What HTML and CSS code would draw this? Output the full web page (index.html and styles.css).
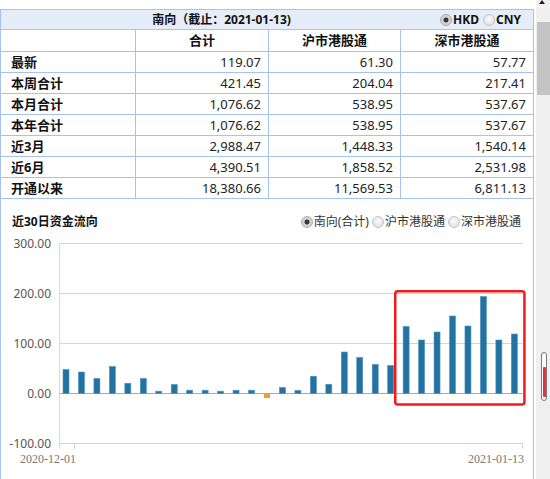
FILE: index.html
```html
<!DOCTYPE html>
<html lang="zh">
<head>
<meta charset="utf-8">
<title>南向资金</title>
<link rel="stylesheet" href="styles.css">
</head>
<body>
<div class="page">
  <div class="panel">
    <div class="tbl">
      <div class="title-row">
        <div class="title">南向（截止：2021-01-13)</div>
        <div class="cur">
          <span class="radio on"></span><span class="cur-label">HKD</span>
          <span class="radio gap"></span><span class="cur-label">CNY</span>
        </div>
      </div>
      <div class="th"></div><div class="th">合计</div><div class="th">沪市港股通</div><div class="th last">深市港股通</div>

      <div class="td lbl">最新</div><div class="td num">119.07</div><div class="td num">61.30</div><div class="td num last">57.77</div>
      <div class="td lbl">本周合计</div><div class="td num">421.45</div><div class="td num">204.04</div><div class="td num last">217.41</div>
      <div class="td lbl">本月合计</div><div class="td num">1,076.62</div><div class="td num">538.95</div><div class="td num last">537.67</div>
      <div class="td lbl">本年合计</div><div class="td num">1,076.62</div><div class="td num">538.95</div><div class="td num last">537.67</div>
      <div class="td lbl">近3月</div><div class="td num">2,988.47</div><div class="td num">1,448.33</div><div class="td num last">1,540.14</div>
      <div class="td lbl">近6月</div><div class="td num">4,390.51</div><div class="td num">1,858.52</div><div class="td num last">2,531.98</div>
      <div class="td lbl">开通以来</div><div class="td num">18,380.66</div><div class="td num">11,569.53</div><div class="td num last">6,811.13</div>
    </div>

    <div class="chart">
      <div class="chart-head">
        <div class="chart-title">近30日资金流向</div>
        <div class="opts">
          <span class="radio on"></span><span class="opt">南向(合计)</span>
          <span class="radio gap2"></span><span class="opt">沪市港股通</span>
          <span class="radio gap2"></span><span class="opt">深市港股通</span>
        </div>
      </div>
      <svg class="plot" width="532" height="250" viewBox="1 229 532 250" xmlns="http://www.w3.org/2000/svg">
        <g stroke="#d4d4d4" stroke-width="1">
          <line x1="59.5" y1="243.5" x2="522.5" y2="243.5"/>
          <line x1="59.5" y1="293.5" x2="522.5" y2="293.5"/>
          <line x1="59.5" y1="343.5" x2="522.5" y2="343.5"/>
        </g>
        <line x1="59.5" y1="243" x2="59.5" y2="448.5" stroke="#d3dbe5"/>
        <line x1="59.5" y1="443.5" x2="522.5" y2="443.5" stroke="#c6d3e3"/>
        <line x1="74.5" y1="443.5" x2="74.5" y2="448.5" stroke="#c6d3e3"/>
        <line x1="522.5" y1="443.5" x2="522.5" y2="448.5" stroke="#c6d3e3"/>
        <line x1="59.5" y1="393.5" x2="522.5" y2="393.5" stroke="#a9a9a9"/>

        <g font-family="Noto Sans, sans-serif" font-size="12" fill="#555" text-anchor="end">
          <text x="51" y="248">300.00</text>
          <text x="51" y="298">200.00</text>
          <text x="51" y="348">100.00</text>
          <text x="51" y="398">0.00</text>
          <text x="51" y="448">-100.00</text>
        </g>
        <g font-family="Liberation Serif, serif" font-size="12" fill="#777" text-anchor="end">
          <text x="76" y="463">2020-12-01</text>
          <text x="524" y="463">2021-01-13</text>
        </g>

        <g fill="#2373a2" stroke="#4f93bf" stroke-width="0.6">
          <rect x="63" y="369.5" width="6" height="24"/>
          <rect x="78.46" y="372" width="6" height="21.5"/>
          <rect x="93.92" y="378.5" width="6" height="15"/>
          <rect x="109.38" y="366.5" width="6" height="27"/>
          <rect x="124.84" y="383.25" width="6" height="10.25"/>
          <rect x="140.3" y="378.5" width="6" height="15"/>
          <rect x="155.76" y="391.2" width="6" height="2.3"/>
          <rect x="171.22" y="384.5" width="6" height="9"/>
          <rect x="186.68" y="390.2" width="6" height="3.3"/>
          <rect x="202.14" y="390.2" width="6" height="3.3"/>
          <rect x="217.6" y="391.2" width="6" height="2.3"/>
          <rect x="233.06" y="390.2" width="6" height="3.3"/>
          <rect x="248.52" y="390.2" width="6" height="3.3"/>
          <rect x="279.44" y="387.5" width="6" height="6"/>
          <rect x="294.9" y="390.5" width="6" height="3"/>
          <rect x="310.36" y="376.25" width="6" height="17.25"/>
          <rect x="325.82" y="384.25" width="6" height="9.25"/>
          <rect x="341.28" y="352" width="6" height="41.5"/>
          <rect x="356.74" y="357.5" width="6" height="36"/>
          <rect x="372.2" y="364.5" width="6" height="29"/>
          <rect x="387.66" y="365.5" width="6" height="28"/>
          <rect x="403.12" y="326.5" width="6" height="67"/>
          <rect x="418.58" y="340" width="6" height="53.5"/>
          <rect x="434.04" y="332" width="6" height="61.5"/>
          <rect x="449.5" y="316" width="6" height="77.5"/>
          <rect x="464.96" y="326" width="6" height="67.5"/>
          <rect x="480.42" y="296.5" width="6" height="97"/>
          <rect x="495.88" y="340" width="6" height="53.5"/>
          <rect x="511.34" y="334" width="6" height="59.5"/>
        </g>
        <rect x="263.98" y="393.5" width="6" height="4.5" fill="#f39a34"/>

        <rect x="395.25" y="291.25" width="129.2" height="113.2" rx="2.5" fill="none" stroke="#f01c1c" stroke-width="2.5"/>
      </svg>
    </div>
  </div>
  <div class="gutter"></div>
  <div class="scrollbar">
    <div class="arrow"></div>
    <div class="thumb"></div>
    <div class="slider"><div class="slider-fill"></div></div>
  </div>
</div>
</body>
</html>
```

FILE: styles.css
```css
html, body {
  margin: 0;
  padding: 0;
  background: #ffffff;
}

body {
  width: 550px;
  height: 479px;
  overflow: hidden;
  font-family: "Noto Sans", "Noto Sans CJK SC", sans-serif;
  color: #222;
}

.page {
  display: flex;
  width: 550px;
  height: 479px;
}

.panel {
  width: 534px;
  margin-top: 9px;
  box-sizing: border-box;
  border-left: 1px solid #a5c2f3;
  border-right: 1px solid #a5c2f3;
  display: flex;
  flex-direction: column;
}

.tbl {
  display: grid;
  grid-template-columns: 135px 133px 132px 132px;
  border-top: 1px solid #a5c2f3;
}

.title-row {
  grid-column: 1 / -1;
  height: 20px;
  box-sizing: border-box;
  border-bottom: 1px solid #a5c2f3;
  background: #e5edf9;
  display: flex;
  align-items: center;
  font-weight: bold;
  color: #111;
}

.title {
  width: 441px;
  flex: none;
  text-align: center;
  font-size: 12px;
  line-height: 19px;
  white-space: nowrap;
}

.cur {
  flex: 1;
  display: flex;
  align-items: center;
  margin-left: -2px;
}

.cur-label {
  font-size: 12px;
  font-weight: bold;
  margin-left: 1px;
  line-height: 19px;
}

.radio {
  display: inline-block;
  width: 10px;
  height: 10px;
  border-radius: 50%;
  border: 1px solid #c4c4c4;
  background: radial-gradient(circle at 50% 40%, #fbfbfb 0, #e4e4e4 70%, #d6d6d6 100%);
  flex: none;
}

.radio.on {
  border-color: #a9a9a9;
  background: radial-gradient(circle at 50% 50%, #3a3a3a 0, #3a3a3a 2.2px, #cfcfcf 2.8px, #dcdcdc 100%);
}

.radio.gap {
  margin-left: 4px;
}

.th {
  height: 22px;
  box-sizing: border-box;
  border-bottom: 1px solid #a5c2f3;
  border-right: 1px solid #a5c2f3;
  text-align: center;
  font-size: 13px;
  font-weight: bold;
  color: #111;
  line-height: 21px;
}

.td {
  height: 21px;
  box-sizing: border-box;
  border-bottom: 1px solid #a5c2f3;
  border-right: 1px solid #a5c2f3;
  font-size: 13px;
  line-height: 20px;
  white-space: nowrap;
}

.last {
  border-right: none;
}

.lbl {
  padding-left: 10px;
  font-weight: bold;
  color: #111;
}

.num {
  text-align: right;
  padding-right: 7px;
}

.chart {
  flex: 1;
  display: flex;
  flex-direction: column;
}

.chart-head {
  height: 30px;
  box-sizing: border-box;
  padding: 15px 11px 0 11px;
  display: flex;
  justify-content: space-between;
  align-items: flex-start;
}

.chart-title {
  font-size: 12px;
  font-weight: bold;
  line-height: 16px;
  color: #111;
}

.opts {
  display: flex;
  align-items: center;
  height: 14px;
  margin-top: 1px;
  margin-right: 1px;
}

.opt {
  font-size: 12px;
  line-height: 14px;
  color: #333;
  margin-left: 1px;
}

.radio.gap2 {
  margin-left: 3px;
}

.plot {
  display: block;
}

.gutter {
  width: 2px;
  flex: none;
}

.scrollbar {
  position: relative;
  width: 14px;
  height: 479px;
  background: #f0f0f0;
  flex: none;
}

.arrow {
  position: absolute;
  left: 3px;
  top: 0;
  width: 0;
  height: 0;
  border-left: 3px solid transparent;
  border-right: 3px solid transparent;
  border-bottom: 4px solid #222;
}

.thumb {
  margin-top: 22px;
  margin-left: 1px;
  width: 13px;
  height: 73px;
  background: #c4c4c4;
}

.slider {
  position: absolute;
  left: 5px;
  top: 352px;
  width: 4px;
  height: 47px;
  border: 1.5px solid #7a7a7a;
  border-radius: 4px;
  background: #fafafa;
}

.slider-fill {
  position: absolute;
  left: 0.5px;
  top: 14px;
  width: 3px;
  height: 30px;
  background: #e6333a;
  border-radius: 1px;
}
```
